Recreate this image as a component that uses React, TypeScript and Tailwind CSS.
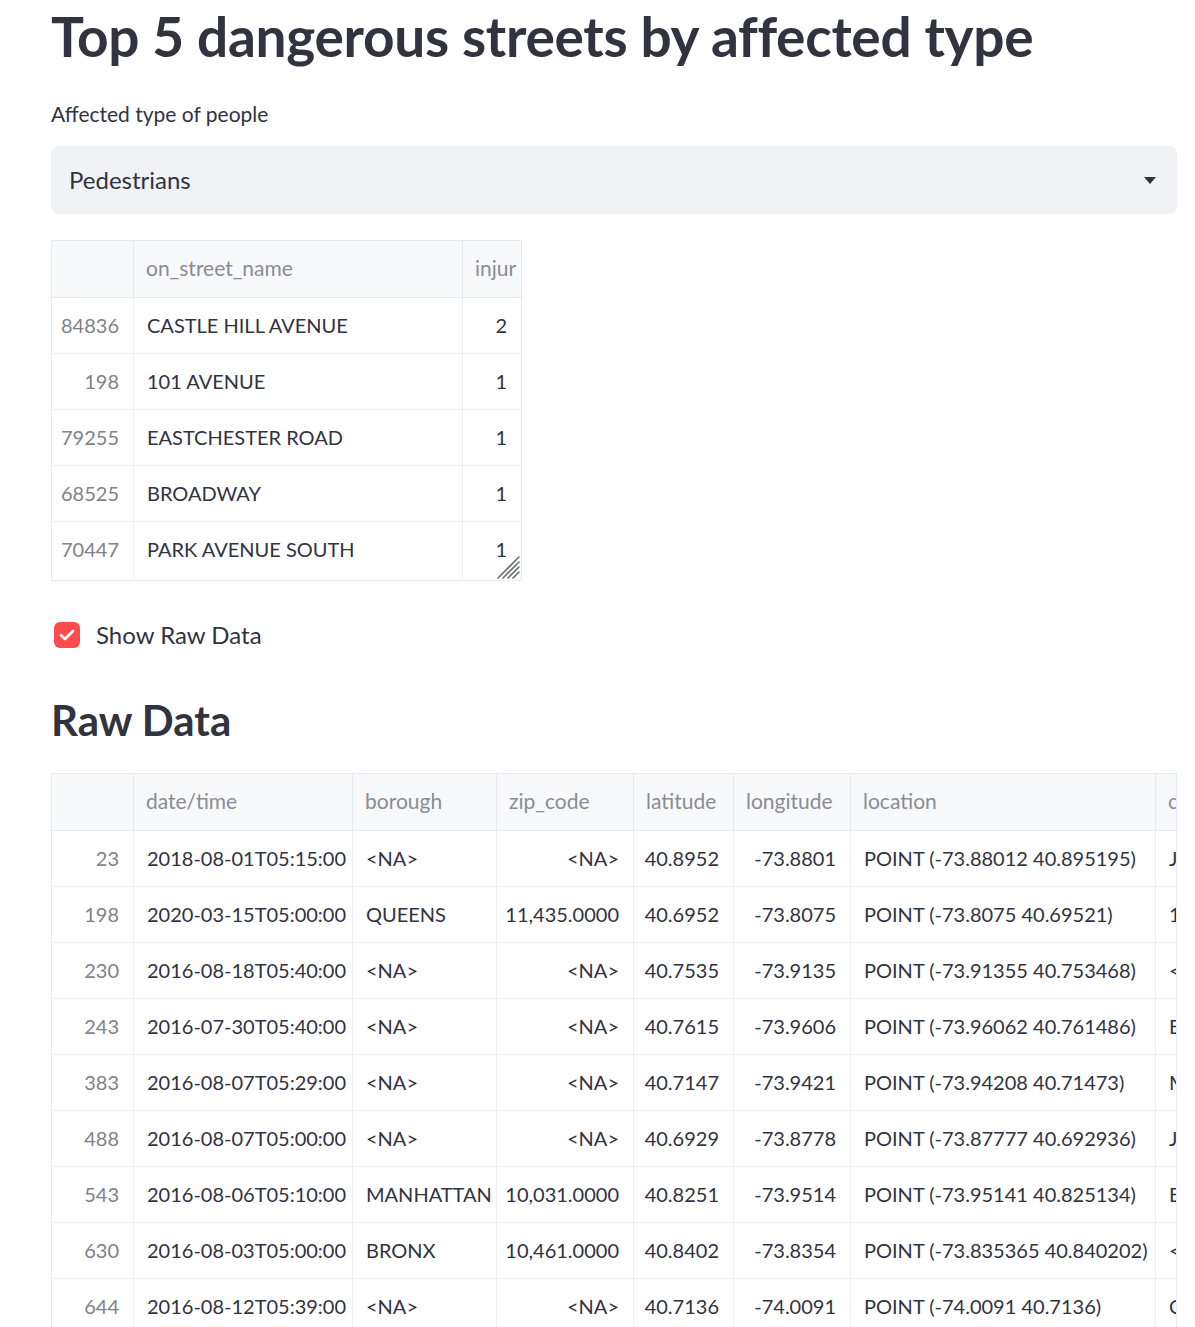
import React from "react";

const font = { fontFamily: "Lato, 'Noto Sans', sans-serif" };

const topRows = [
  ["84836", "CASTLE HILL AVENUE", "2"],
  ["198", "101 AVENUE", "1"],
  ["79255", "EASTCHESTER ROAD", "1"],
  ["68525", "BROADWAY", "1"],
  ["70447", "PARK AVENUE SOUTH", "1"],
];

const rawRows = [
  ["23", "2018-08-01T05:15:00", "<NA>", "<NA>", "40.8952", "-73.8801", "POINT (-73.88012 40.895195)", "JEROME AVENUE"],
  ["198", "2020-03-15T05:00:00", "QUEENS", "11,435.0000", "40.6952", "-73.8075", "POINT (-73.8075 40.69521)", "101 AVENUE"],
  ["230", "2016-08-18T05:40:00", "<NA>", "<NA>", "40.7535", "-73.9135", "POINT (-73.91355 40.753468)", "<NA>"],
  ["243", "2016-07-30T05:40:00", "<NA>", "<NA>", "40.7615", "-73.9606", "POINT (-73.96062 40.761486)", "EAST 63 STREET"],
  ["383", "2016-08-07T05:29:00", "<NA>", "<NA>", "40.7147", "-73.9421", "POINT (-73.94208 40.71473)", "METROPOLITAN AVENUE"],
  ["488", "2016-08-07T05:00:00", "<NA>", "<NA>", "40.6929", "-73.8778", "POINT (-73.87777 40.692936)", "JAMAICA AVENUE"],
  ["543", "2016-08-06T05:10:00", "MANHATTAN", "10,031.0000", "40.8251", "-73.9514", "POINT (-73.95141 40.825134)", "EDGECOMBE AVENUE"],
  ["630", "2016-08-03T05:00:00", "BRONX", "10,461.0000", "40.8402", "-73.8354", "POINT (-73.835365 40.840202)", "<NA>"],
  ["644", "2016-08-12T05:39:00", "<NA>", "<NA>", "40.7136", "-74.0091", "POINT (-74.0091 40.7136)", "CHAMBERS STREET"],
];

// right-aligned columns in the raw table
const rawRight = [true, false, false, true, true, true, false, false];

function Handle() {
  return (
    <svg width="26" height="26" viewBox="0 0 26 26" className="absolute right-0 bottom-0">
      <g stroke="#6b6d76" strokeWidth="1.6" strokeLinecap="round">
        <line x1="3" y1="24" x2="24" y2="3" />
        <line x1="8" y1="24" x2="24" y2="8" />
        <line x1="13" y1="24" x2="24" y2="13" />
        <line x1="18" y1="24" x2="24" y2="18" />
      </g>
    </svg>
  );
}

export default function App() {
  return (
    <div className="min-h-screen bg-white text-[#31333f]" style={font}>
      <div className="pl-[51px] pr-[18px] pt-[4px] pb-10">
        <h1 className="text-[55px] font-bold leading-[64px] tracking-[-0.3px]">
          Top 5 dangerous streets by affected type
        </h1>

        {/* SELECT */}
        <div className="mt-[32px] text-[21px] leading-[28px]">Affected type of people</div>
        <div className="mt-[18px] h-[68px] rounded-[8px] bg-[#f0f2f6] flex items-center justify-between pl-[18px] pr-[21px]">
          <span className="text-[24px]">Pedestrians</span>
          <svg width="12" height="7" viewBox="0 0 12 7">
            <path d="M0 0 L12 0 L6 7 Z" fill="#31333f" />
          </svg>
        </div>

        {/* TOP 5 TABLE */}
        <div className="relative mt-[26px] w-[471px] border border-[#e6e9ef] pb-[2px] text-[20px]">
          <div className="grid grid-cols-[82px_329px_58px] h-[57px] bg-[#f8f9fb] border-b border-[#e6e9ef] text-[#8a8c94] text-[21px]">
            <div className="border-r border-[#e6e9ef]" />
            <div className="border-r border-[#e6e9ef] flex items-center px-[12px] pb-[2px]">on_street_name</div>
            <div className="flex items-center pl-[12px] pb-[2px] overflow-hidden whitespace-nowrap">injur</div>
          </div>
          {topRows.map((r, i) => (
            <div
              key={r[0]}
              className={`grid grid-cols-[82px_329px_58px] h-[56px] ${i < topRows.length - 1 ? "border-b border-[#eceef2]" : ""}`}
            >
              <div className="border-r border-[#eceef2] flex items-center justify-end pr-[14px] pb-[2px] text-[#808289]">{r[0]}</div>
              <div className="border-r border-[#eceef2] flex items-center px-[13px] pb-[2px]">{r[1]}</div>
              <div className="flex items-center justify-end pr-[14px] pb-[2px]">{r[2]}</div>
            </div>
          ))}
          <Handle />
        </div>

        {/* CHECKBOX */}
        <label className="mt-[40px] flex items-center gap-[16px]">
          <span className="ml-[3px] w-[26px] h-[26px] rounded-[6px] bg-[#ff4b4b] flex items-center justify-center">
            <svg width="16" height="12" viewBox="0 0 16 12">
              <path d="M2 6.2 L6 10 L14 2" stroke="white" strokeWidth="2.6" fill="none" strokeLinecap="round" strokeLinejoin="round" />
            </svg>
          </span>
          <span className="text-[24px] leading-[28px]">Show Raw Data</span>
        </label>

        <h2 className="mt-[45px] text-[42px] font-bold leading-[52px]">Raw Data</h2>

        {/* RAW TABLE */}
        <div className="mt-[27px] w-[1126px] overflow-hidden border-t border-l border-r border-[#e6e9ef] text-[20px]">
          <div className="grid grid-cols-[82px_219px_144px_137px_100px_117px_305px_200px] h-[57px] bg-[#f8f9fb] border-b border-[#e6e9ef] text-[#8a8c94] text-[21px]">
            <div className="border-r border-[#e6e9ef]" />
            {["date/time", "borough", "zip_code", "latitude", "longitude", "location", "cross_street_name"].map((h) => (
              <div key={h} className="border-r border-[#e6e9ef] flex items-center px-[12px] pb-[2px] whitespace-nowrap overflow-hidden">
                {h}
              </div>
            ))}
          </div>
          {rawRows.map((r) => (
            <div
              key={r[0]}
              className="grid grid-cols-[82px_219px_144px_137px_100px_117px_305px_200px] h-[56px] border-b border-[#eceef2]"
            >
              {r.map((c, j) => (
                <div
                  key={j}
                  className={`border-r border-[#eceef2] flex items-center pb-[2px] whitespace-nowrap overflow-hidden ${
                    rawRight[j] ? "justify-end pr-[14px]" : "px-[13px]"
                  } ${j === 0 ? "text-[#808289]" : ""}`}
                >
                  {c}
                </div>
              ))}
            </div>
          ))}
        </div>
      </div>
    </div>
  );
}
